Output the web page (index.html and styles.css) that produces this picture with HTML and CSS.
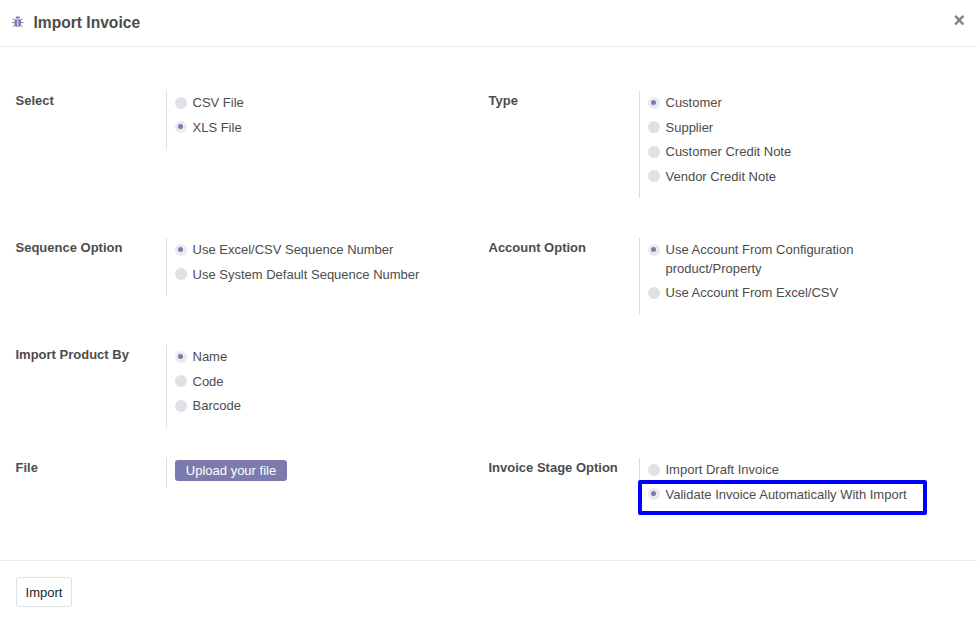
FILE: index.html
```html
<!DOCTYPE html>
<html lang="en">
<head>
<meta charset="utf-8">
<title>Import Invoice</title>
<link rel="stylesheet" href="styles.css">
</head>
<body>
<div class="modal">
  <header class="modal-header">
    <svg class="bug" viewBox="0 0 12 13" aria-hidden="true">
      <path class="shape" d="M3.4 2.6a2.4 2.3 0 0 1 4.8 0zM2.5 3.9h2.8v7.3C3.6 11 2.5 10 2.5 8.3zM6.2 3.9H9v4.4c0 1.7-1.1 2.7-2.8 2.9z"/>
      <path class="legs" d="M1 2.6 2.5 4h6.6l1.5-1.4M2.7 6.6H0M8.9 6.6h2.7M3 9l-1.9 1.9M8.6 9l1.9 1.9"/>
    </svg>
    <h4 class="title">Import Invoice</h4>
    <button class="close" type="button">×</button>
  </header>
  <main class="modal-body">
    <div class="row row-first">
      <div class="field"><div class="label">Select</div><div class="value">
        <div class="option"><span class="radio"></span>CSV File</div>
        <div class="option"><span class="radio checked"></span>XLS File</div>
      </div></div>
      <div class="field"><div class="label">Type</div><div class="value">
        <div class="option"><span class="radio checked"></span>Customer</div>
        <div class="option"><span class="radio"></span>Supplier</div>
        <div class="option"><span class="radio"></span>Customer Credit Note</div>
        <div class="option"><span class="radio"></span>Vendor Credit Note</div>
      </div></div>
    </div>
    <div class="row">
      <div class="field"><div class="label">Sequence Option</div><div class="value">
        <div class="option"><span class="radio checked"></span>Use Excel/CSV Sequence Number</div>
        <div class="option"><span class="radio"></span>Use System Default Sequence Number</div>
      </div></div>
      <div class="field"><div class="label">Account Option</div><div class="value">
        <div class="option option-wrapped"><span class="radio checked"></span>Use Account From Configuration<br>product/Property</div>
        <div class="option"><span class="radio"></span>Use Account From Excel/CSV</div>
      </div></div>
    </div>
    <div class="row">
      <div class="field"><div class="label">Import Product By</div><div class="value">
        <div class="option"><span class="radio checked"></span>Name</div>
        <div class="option"><span class="radio"></span>Code</div>
        <div class="option"><span class="radio"></span>Barcode</div>
      </div></div>
    </div>
    <div class="row">
      <div class="field"><div class="label">File</div><div class="value value-file">
        <button class="upload" type="button">Upload your file</button>
      </div></div>
      <div class="field"><div class="label">Invoice Stage Option</div><div class="value">
        <div class="option"><span class="radio"></span>Import Draft Invoice</div>
        <div class="option"><span class="radio checked"></span>Validate Invoice Automatically With Import</div>
        <div class="highlight"></div>
      </div></div>
    </div>
  </main>
  <footer class="modal-footer">
    <button class="import" type="button">Import</button>
  </footer>
</div>
</body>
</html>
```
FILE: styles.css
```css
* { box-sizing: border-box; }
body {
  margin: 0;
  background: #fff;
  color: #4c4c4c;
  font: 13px/19.5px "Liberation Sans", Arial, sans-serif;
}
button { font: inherit; cursor: pointer; }
.modal { display: flex; flex-direction: column; height: 627px; overflow: hidden; }
.modal-header {
  display: flex;
  align-items: center;
  height: 47px;
  padding: 0 12px 1px 12px;
  border-bottom: 1px solid #e9ecef;
}
.bug { width: 12px; height: 13px; margin-right: 9.5px; }
.shape { fill: #7c7bad; }
.legs { fill: none; stroke: #7c7bad; stroke-width: 1; }
.title { margin: 0; font-size: 15.6px; line-height: 24px; }
.close {
  margin: -5px 0 0 auto;
  padding: 0;
  border: 0;
  background: none;
  color: #808080;
  font-size: 19.5px;
  font-weight: bold;
  line-height: 20px;
}
.modal-body { flex: none; height: 513px; padding: 44px 16px 0 15.5px; }
.row {
  display: grid;
  grid-template-columns: 473px 1fr;
  align-items: start;
  margin-bottom: 30.5px;
}
.row-first { margin-bottom: 40px; }
.field { display: grid; grid-template-columns: 150.5px 1fr; align-items: start; }
.label { font-weight: bold; }
.value {
  position: relative;
  padding: 2px 0 7px 8px;
  border-left: 1px solid #ddd;
}
.value-file { height: 30px; }
.option { position: relative; margin-bottom: 5px; padding-left: 17.5px; }
.option-wrapped { line-height: 19px; }
.radio {
  position: absolute;
  top: 3.9px;
  left: 0;
  width: 12px;
  height: 12px;
  border-radius: 50%;
  background: #dee2e6;
}
.radio.checked { background: #e9ecef; }
.radio.checked::after {
  content: "";
  position: absolute;
  top: 3px;
  left: 3px;
  width: 5px;
  height: 5px;
  border-radius: 50%;
  background: #7c7bad;
}
.upload {
  display: block;
  width: 112px;
  height: 21px;
  padding: 0;
  border: 0;
  border-radius: 3px;
  background: #7c7bad;
  color: #fff;
  line-height: 21px;
}
.highlight {
  position: absolute;
  top: 22px;
  left: -2px;
  width: 289px;
  height: 35px;
  border: 4px solid #00f;
  border-radius: 2px;
}
.modal-footer { flex: 1; padding: 16px; border-top: 1px solid #e9ecef; }
.import {
  display: block;
  width: 56px;
  height: 30px;
  padding: 1px 0 0;
  border: 1px solid #dee2e6;
  border-radius: 3px;
  background: #fff;
  color: #212529;
}
```
